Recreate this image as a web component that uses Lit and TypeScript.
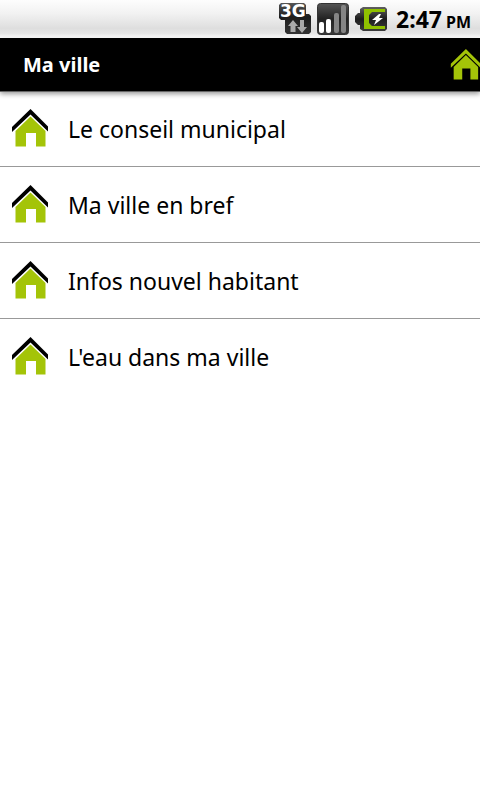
import { LitElement, html, css } from "lit";
import { customElement, property } from "lit/decorators.js";

const FONT = css`"Noto Sans", "Open Sans", sans-serif`;

@customElement("status-bar")
class StatusBar extends LitElement {
  static styles = css`
    :host {
      display: flex;
      align-items: center;
      justify-content: flex-end;
      gap: 6px;
      height: 38px;
      padding-right: 9px;
      box-sizing: border-box;
      background: linear-gradient(#fdfdfd 0, #f2f2f2 35%, #dedede 75%, #e6e6e6 88%, #fff 100%);
      color: #000;
      font-family: ${FONT};
      font-weight: 700;
    }
    svg {
      display: block;
      flex: none;
    }
    .label {
      font: 700 17px "DejaVu Sans", sans-serif;
      fill: #fff;
    }
    .clock {
      display: flex;
      align-items: baseline;
      gap: 4px;
      margin-left: 3px;
      padding-top: 2px;
      font-size: 23px;
      line-height: 36px;
    }
    .period {
      font-size: 16px;
    }
  `;

  render() {
    return html`
      <svg width="32" height="34" viewBox="0 0 32 34" role="img" aria-label="3G data">
        <defs>
          <linearGradient id="dark" x1="0" y1="0" x2="0" y2="1">
            <stop offset="0" stop-color="#555" />
            <stop offset="0.45" stop-color="#1c1c1c" />
            <stop offset="1" stop-color="#333" />
          </linearGradient>
        </defs>
        <path d="M2 1H25L27 3V12H30L32 14V30L30 32H8L6 30V18H2L0 16V3Z" fill="url(#dark)" />
        <text class="label" x="1" y="15">3G</text>
        <path d="M14 18L19 24H16.500V30H11.500V24H9Z" fill="#aaa" />
        <path d="M21 18H25V25H28L23 31L18 25H21Z" fill="#aaa" />
      </svg>
      <svg width="32" height="34" viewBox="0 0 32 34" role="img" aria-label="Signal strength">
        <defs>
          <linearGradient id="box" x1="0" y1="0" x2="0" y2="1">
            <stop offset="0" stop-color="#555" />
            <stop offset="0.5" stop-color="#222" />
            <stop offset="1" stop-color="#3a3a3a" />
          </linearGradient>
        </defs>
        <rect x="0.500" y="1.500" width="31" height="31" rx="3" fill="url(#box)" stroke="#333" />
        <rect x="2" y="20" width="5" height="11" rx="2" fill="#fff" />
        <rect x="9" y="17" width="5" height="14" rx="2" fill="#fff" />
        <rect x="17" y="11" width="5" height="20" rx="2" fill="#858585" />
        <rect x="24" y="3" width="5" height="28" rx="2" fill="#858585" />
      </svg>
      <svg width="32" height="26" viewBox="0 0 32 26" role="img" aria-label="Battery charging">
        <defs>
          <linearGradient id="cell" x1="0" y1="0" x2="0" y2="1">
            <stop offset="0" stop-color="#606060" />
            <stop offset="0.5" stop-color="#1c1c1c" />
            <stop offset="1" stop-color="#3c3c3c" />
          </linearGradient>
        </defs>
        <path d="M8 1H30L32 3V23L30 25H8L5 23V19H3L0 16V10L3 7H5V3Z" fill="url(#cell)" />
        <path d="M9 3H30V6H17L14 9V17L17 20H30V23H9Z" fill="#8fc000" />
        <path d="M24 8L17 14H21L19 19L28 12H24L26 8Z" fill="#fff" />
      </svg>
      <div class="clock"><span>2:47</span><span class="period">PM</span></div>
    `;
  }
}

@customElement("house-icon")
class HouseIcon extends LitElement {
  @property() roof = "#000";
  @property() wall = "#a4c408";

  static styles = css`
    :host {
      display: block;
    }
    svg {
      display: block;
      width: 100%;
      height: 100%;
    }
  `;

  render() {
    return html`
      <svg viewBox="0 0 36 38" aria-hidden="true">
        <path d="M18.500 0L36 17.500V22.500L18.500 5.500L0 23V18Z" fill=${this.roof} />
        <path d="M18.500 7.500L33.500 22V37.500H24V24H14V37.500H3.500V22Z" fill=${this.wall} />
      </svg>
    `;
  }
}

@customElement("app-root")
class AppRoot extends LitElement {
  static styles = css`
    :host {
      display: block;
      min-height: 100vh;
      background: #fff;
      color: #000;
      font-family: ${FONT};
    }
    header {
      position: relative;
      display: flex;
      align-items: center;
      justify-content: space-between;
      height: 53px;
      padding-left: 23px;
      background: #000;
      box-shadow: 0 1px 0 #666, 0 3px 5px #999;
    }
    h1 {
      margin: 0;
      color: #fff;
      font-size: 20px;
      font-weight: 700;
    }
    .home {
      width: 30px;
      height: 32px;
      padding: 0;
      border: 0;
      background: none;
      overflow: hidden;
    }
    .home house-icon {
      width: 31px;
      height: 31px;
    }
    ul {
      margin: 0;
      padding: 0;
      list-style: none;
    }
    li + li {
      border-top: 1px solid #999;
    }
    a {
      display: flex;
      align-items: center;
      gap: 20px;
      height: 75px;
      padding: 0 12px;
      color: inherit;
      font-size: 23px;
      text-decoration: none;
    }
    a house-icon {
      flex: none;
      width: 36px;
      height: 38px;
      padding-bottom: 2px;
    }
  `;

  private items = ["Le conseil municipal", "Ma ville en bref", "Infos nouvel habitant", "L'eau dans ma ville"];

  render() {
    return html`
      <status-bar></status-bar>
      <header>
        <h1>Ma ville</h1>
        <button class="home" aria-label="Accueil">
          <house-icon roof="#a4c408"></house-icon>
        </button>
      </header>
      <ul>
        ${this.items.map((item) => html`<li><a href="#"><house-icon></house-icon><span>${item}</span></a></li>`)}
      </ul>
    `;
  }
}
